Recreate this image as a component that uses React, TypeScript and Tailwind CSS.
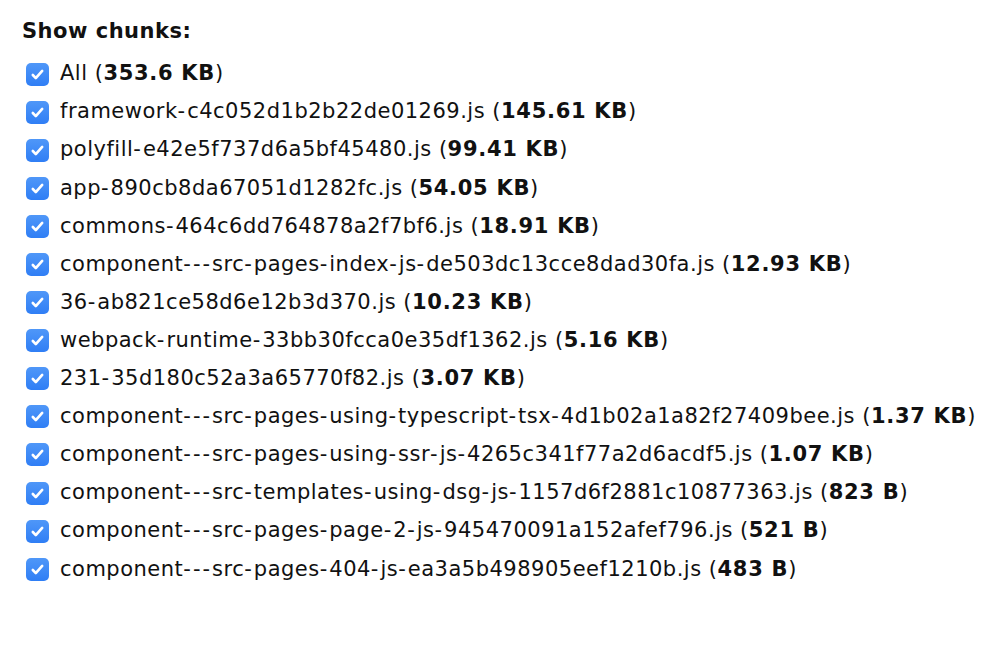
import React from 'react';

type Chunk = { name: string; size: string };

const chunks: Chunk[] = [
  { name: 'All', size: '353.6 KB' },
  { name: 'framework-c4c052d1b2b22de01269.js', size: '145.61 KB' },
  { name: 'polyfill-e42e5f737d6a5bf45480.js', size: '99.41 KB' },
  { name: 'app-890cb8da67051d1282fc.js', size: '54.05 KB' },
  { name: 'commons-464c6dd764878a2f7bf6.js', size: '18.91 KB' },
  { name: 'component---src-pages-index-js-de503dc13cce8dad30fa.js', size: '12.93 KB' },
  { name: '36-ab821ce58d6e12b3d370.js', size: '10.23 KB' },
  { name: 'webpack-runtime-33bb30fcca0e35df1362.js', size: '5.16 KB' },
  { name: '231-35d180c52a3a65770f82.js', size: '3.07 KB' },
  { name: 'component---src-pages-using-typescript-tsx-4d1b02a1a82f27409bee.js', size: '1.37 KB' },
  { name: 'component---src-pages-using-ssr-js-4265c341f77a2d6acdf5.js', size: '1.07 KB' },
  { name: 'component---src-templates-using-dsg-js-1157d6f2881c10877363.js', size: '823 B' },
  { name: 'component---src-pages-page-2-js-945470091a152afef796.js', size: '521 B' },
  { name: 'component---src-pages-404-js-ea3a5b498905eef1210b.js', size: '483 B' },
];

const Check = () => (
  <span className="flex h-[23px] w-[23px] shrink-0 items-center justify-center rounded-[5px] bg-gradient-to-b from-[#4f97f8] to-[#2f7ef5]">
    <svg width="15" height="15" viewBox="0 0 16 16" fill="none">
      <path d="M3 8.5l3.2 3.3L13 4.2" stroke="white" strokeWidth="2.8" strokeLinecap="round" strokeLinejoin="round" />
    </svg>
  </span>
);

// hyphens are a bit wider in the original font
const Name = ({ text }: { text: string }) => (
  <>
    {text.split('-').map((part, i) => (
      <React.Fragment key={i}>
        {i > 0 && <span className="tracking-[2px]">-</span>}
        {part}
      </React.Fragment>
    ))}
  </>
);

export default function App() {
  return (
    <div className="min-h-[666px] w-[1006px] bg-white pl-[22px] pt-[17px] tracking-[0.5px] text-[#111] font-['DejaVu_Sans',Verdana,sans-serif]">
      <div className="text-[21px] font-bold leading-[28px]">Show chunks:</div>
      <ul className="mt-[10px]">
        {chunks.map((c) => (
          <li key={c.name} className="flex h-[38.1px] items-center gap-[11px] pl-[4px] text-[21px]">
            <Check />
            <span className="whitespace-nowrap">
              <Name text={c.name} /> (<b className="tracking-[0.7px]">{c.size}</b>)
            </span>
          </li>
        ))}
      </ul>
    </div>
  );
}
